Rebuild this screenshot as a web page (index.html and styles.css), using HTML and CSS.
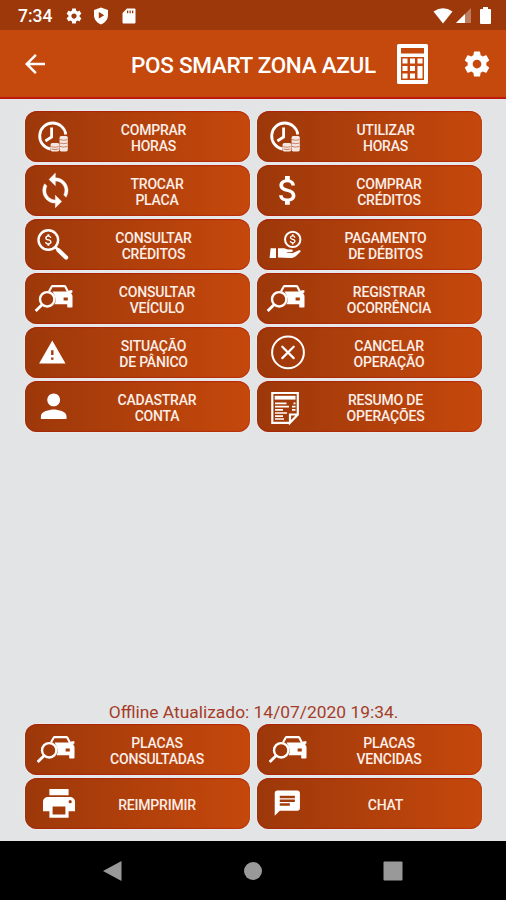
FILE: index.html
```
<!DOCTYPE html>
<html lang="pt-BR">
<head>
    <meta charset="UTF-8">
    <meta name="viewport" content="width=device-width, initial-scale=1.0">
    <title>POS Smart Zona Azul</title>
    <link rel="stylesheet" href="styles.css">
</head>
<body>
    <svg class="sprite">
        <symbol id="gear" viewBox="0 0 24 24">
            <path d="M19.43 12.98c.04-.32.07-.64.07-.98s-.03-.66-.07-.98l2.11-1.65c.19-.15.24-.42.12-.64l-2-3.46c-.12-.22-.39-.3-.61-.22l-2.49 1c-.52-.4-1.08-.73-1.69-.98l-.38-2.65C14.46 2.18 14.25 2 14 2h-4c-.25 0-.46.18-.49.42l-.38 2.65c-.61.25-1.17.59-1.69.98l-2.49-1c-.23-.09-.49 0-.61.22l-2 3.46c-.13.22-.07.49.12.64l2.11 1.65c-.04.32-.07.65-.07.98s.03.66.07.98l-2.11 1.65c-.19.15-.24.42-.12.64l2 3.46c.12.22.39.3.61.22l2.49-1c.52.4 1.08.73 1.69.98l.38 2.65c.03.24.24.42.49.42h4c.25 0 .46-.18.49-.42l.38-2.65c.61-.25 1.17-.59 1.69-.98l2.49 1c.23.09.49 0 .61-.22l2-3.46c.12-.22.07-.49-.12-.64l-2.11-1.65zM12 15.5c-1.93 0-3.5-1.57-3.5-3.5s1.57-3.5 3.5-3.5 3.5 1.57 3.5 3.5-1.57 3.5-3.5 3.5z"/>
        </symbol>
        <symbol id="clock" viewBox="0 0 51 51">
            <path class="stroke" stroke-width="2.8" d="M40.8 23.5A13.1 13.1 0 1 0 25.5 38"/>
            <path class="stroke" stroke-width="2.8" d="M26.6 16.5V26l-6.2 4"/>
            <rect x="34.6" y="25" width="8.2" height="15.4" rx="1.6" opacity=".88"/>
            <rect x="25.6" y="32" width="8.6" height="8.4" rx="1.6" opacity=".88"/>
            <path class="cut" d="M35 28.6q3.7 1.4 7.4 0M35 32q3.7 1.4 7.4 0M35 35.4q3.7 1.4 7.4 0M26.4 35.6q3.6 1.4 7.2 0M26.4 38q3.6 1.2 7.2 0"/>
        </symbol>
        <symbol id="loop" viewBox="0 0 51 51">
            <path stroke="white" stroke-width=".25" transform="translate(11.4 6.5) scale(1.58)" d="M12 4V1L8 5l4 4V6c3.31 0 6 2.69 6 6 0 1.01-.25 1.97-.7 2.8l1.46 1.46C19.54 15.03 20 13.57 20 12c0-4.42-3.58-8-8-8zm0 14c-3.31 0-6-2.69-6-6 0-1.01.25-1.97.7-2.8L5.24 7.74C4.46 8.97 4 10.43 4 12c0 4.42 3.58 8 8 8v3l4-4-4-4v3z"/>
        </symbol>
        <symbol id="dollar" viewBox="0 0 24 24">
            <path d="M11.8 10.9c-2.27-.59-3-1.2-3-2.15 0-1.09 1.01-1.85 2.7-1.85 1.78 0 2.44.85 2.5 2.1h2.21c-.07-1.72-1.12-3.3-3.21-3.81V3h-3v2.16c-1.94.42-3.5 1.68-3.5 3.61 0 2.31 1.91 3.46 4.7 4.13 2.5.6 3 1.48 3 2.41 0 .69-.49 1.79-2.7 1.79-2.06 0-2.87-.92-2.98-2.1h-2.2c.12 2.19 1.76 3.42 3.68 3.83V21h3v-2.15c1.95-.37 3.5-1.5 3.5-3.55 0-2.84-2.43-3.81-4.7-4.4z"/>
        </symbol>
        <symbol id="money" viewBox="0 0 51 51">
            <use href="#dollar" x="12" y="6.2" width="38.4" height="38.4"/>
        </symbol>
        <symbol id="search-money" viewBox="0 0 51 51">
            <circle class="stroke" stroke-width="2.4" cx="23.3" cy="21" r="9.8"/>
            <path class="stroke" stroke-width="2.6" d="M30.3 28l4 4"/>
            <path class="stroke" stroke-width="4.2" d="M33.5 31.2l7.6 7.4" stroke-linecap="round"/>
            <use href="#dollar" x="16" y="13.3" width="15.4" height="15.4"/>
        </symbol>
        <symbol id="hand" viewBox="0 0 51 51">
            <circle class="stroke" stroke-width="2" cx="35.7" cy="20.4" r="7.7"/>
            <use href="#dollar" x="29.2" y="13.6" width="13.6" height="13.6"/>
            <path d="M13.6 29.2H19v9.8h-6.4z"/>
            <path d="M21 29.2h6c1.6 0 2.6 1.3 4.200 1.300h3.300c1.600 0 1.800 2.200.2 2.400l-5 .5v.7h6.200l6-2.800c1.600-.6 2.300.6 1.300 1.600-2.600 2.600-5.400 5.900-8.400 6-5 .2-9.600-.4-13.800-.4z"/>
        </symbol>
        <symbol id="car" viewBox="0 0 51 51">
            <path class="stroke" stroke-width="2.1" d="M24 18.500l2.600-4.700c.3-.5.6-.7 1.200-.7h11.400c.6 0 1 .2 1.200.7l2.800 5.400"/>
            <path fill-rule="evenodd" d="M27.500 18.500h15l2.300-1.200h2.600v2.200l-1.300.5 1.400 2.700v11.100q0 .8-.8.8H43q-.8 0-.8-.8v-2.600H29.500q3-5-2-12.700zM38.600 24.600v2.900h4.200v-2.900z"/>
            <circle class="stroke" stroke-width="2.400" cx="22.200" cy="26.300" r="7.200"/>
            <path class="stroke" stroke-width="2.800" d="M17 31.700l-6.300 6.400"/>
        </symbol>
        <symbol id="warning" viewBox="0 0 51 51">
            <path transform="translate(12.9 11.2) scale(1.2)" d="M1 21h22L12 2 1 21zm12-3h-2v-2h2v2zm0-4h-2v-4h2v4z"/>
        </symbol>
        <symbol id="cancel" viewBox="0 0 51 51">
            <circle class="stroke" stroke-width="2" cx="31" cy="25.4" r="15.9"/>
            <path class="stroke" stroke-width="2.2" stroke-linecap="round" d="M25.3 19.7l11.4 11.4M36.7 19.7L25.300 31.100"/>
        </symbol>
        <symbol id="person" viewBox="0 0 51 51">
            <path transform="translate(9.5 6.1) scale(1.6)" d="M12 12c2.21 0 4-1.79 4-4s-1.79-4-4-4-4 1.79-4 4 1.79 4 4 4zm0 2c-2.67 0-8 1.34-8 4v2h16v-2c0-2.66-5.33-4-8-4z"/>
        </symbol>
        <symbol id="report" viewBox="0 0 51 51">
            <path class="stroke" stroke-width="2.2" d="M33 41.800H15.300V12h25.500v21.500L33 41.800v-8.300h7.800"/>
            <path d="M17.700 14.800h20.800v3.800H17.700z"/>
            <path class="stroke" stroke-width="1.7" d="M18 22.400h11.500M18 25.600h14M18 28.800h8M18 32h12M18 35.200h8M18 38h9M36.500 22.400h2M35 25.600h3.500M35 28.800h3.500"/>
        </symbol>
        <symbol id="printer" viewBox="0 0 51 51">
            <path transform="translate(14.8 6.1) scale(1.6)" d="M19 8H5c-1.66 0-3 1.34-3 3v6h4v4h12v-4h4v-6c0-1.66-1.34-3-3-3zm-3 11H8v-5h8v5zm3-7c-.55 0-1-.45-1-1s.45-1 1-1 1 .45 1 1-.45 1-1 1zm-1-9H6v4h12V3z"/>
        </symbol>
        <symbol id="chat" viewBox="0 0 51 51">
            <path transform="translate(15.2 10.1) scale(1.26)" d="M20 2H4c-1.1 0-1.99.9-1.99 2L2 22l4-4h14c1.1 0 2-.9 2-2V4c0-1.1-.9-2-2-2zM6 9h12v2H6V9zm8 5H6v-2h8v2zm4-6H6V6h12v2z"/>
        </symbol>
    </svg>

    <div class="screen">
        <div class="status-bar">
            <span class="time">7:34</span>
            <svg class="status-gear" viewBox="0 0 24 24"><use href="#gear"/></svg>
            <svg class="status-shield" viewBox="0 0 16 18"><path fill-rule="evenodd" d="M8 .5l7 2.6v5.2c0 4.3-3 7.6-7 9.2-4-1.6-7-4.9-7-9.200V3.100zM5.800 5v6.600l5.400-3.300z"/></svg>
            <svg class="status-card" viewBox="0 0 14 16"><path fill-rule="evenodd" d="M5 .5h7.5q1 0 1 1v13q0 1-1 1h-11q-1 0-1-1V5zM5 2.500v2.800h1.300V2.500zM7.500 2.500v2.800h1.300V2.500zM10 2.500v2.800h1.300V2.500z"/></svg>
            <div class="status-right">
                <svg width="20" height="16" viewBox="0 0 20 16"><path d="M10 15.5L.5 3.5Q10-3 19.5 3.5z"/></svg>
                <svg width="15" height="15" viewBox="0 0 15 15"><path opacity=".35" d="M15 0v15H0z"/><path d="M9 6v9H0z"/></svg>
                <svg class="battery" width="11" height="17" viewBox="0 0 11 17"><path d="M3 0h5v2h2q1 0 1 1v13q0 1-1 1H1q-1 0-1-1V3q0-1 1-1h2z"/></svg>
            </div>
        </div>

        <div class="toolbar">
            <svg class="back" viewBox="0 0 24 24"><path d="M20 11H7.83l5.59-5.59L12 4l-8 8 8 8 1.41-1.41L7.83 13H20v-2z"/></svg>
            <h1>POS SMART ZONA AZUL</h1>
            <svg class="calculator" viewBox="0 0 31 40">
                <path fill-rule="evenodd" d="M1.5 0h28Q31 0 31 1.5v37q0 1.5-1.5 1.5h-28Q0 40 0 38.5v-37Q0 0 1.5 0zM4 4v5.500h23V4zM4 13v23h23V13z"/>
                <path d="M5.500 14.500h5v5h-5zM13 14.500h5v5h-5zM20.500 14.500h5v5h-5zM5.500 22h5v5h-5zM13 22h5v5h-5zM20.500 22h5v12.500h-5zM5.500 29.500h5v5h-5zM13 29.500h5v5h-5z"/>
            </svg>
            <svg class="settings" viewBox="0 0 24 24"><use href="#gear"/></svg>
        </div>

        <div class="content">
            <div class="grid">
                <button class="btn"><svg><use href="#clock"/></svg><span>COMPRAR<br>HORAS</span></button>
                <button class="btn"><svg><use href="#clock"/></svg><span>UTILIZAR<br>HORAS</span></button>
                <button class="btn wide"><svg><use href="#loop"/></svg><span>TROCAR<br>PLACA</span></button>
                <button class="btn wide"><svg><use href="#money"/></svg><span>COMPRAR<br>CRÉDITOS</span></button>
                <button class="btn"><svg><use href="#search-money"/></svg><span>CONSULTAR<br>CRÉDITOS</span></button>
                <button class="btn"><svg><use href="#hand"/></svg><span>PAGAMENTO<br>DE DÉBITOS</span></button>
                <button class="btn wide"><svg><use href="#car"/></svg><span>CONSULTAR<br>VEÍCULO</span></button>
                <button class="btn wide"><svg><use href="#car"/></svg><span>REGISTRAR<br>OCORRÊNCIA</span></button>
                <button class="btn"><svg><use href="#warning"/></svg><span>SITUAÇÃO<br>DE PÂNICO</span></button>
                <button class="btn wide"><svg><use href="#cancel"/></svg><span>CANCELAR<br>OPERAÇÃO</span></button>
                <button class="btn wide"><svg><use href="#person"/></svg><span>CADASTRAR<br>CONTA</span></button>
                <button class="btn"><svg><use href="#report"/></svg><span>RESUMO DE<br>OPERAÇÕES</span></button>
            </div>

            <p class="offline">Offline Atualizado: 14/07/2020 19:34.</p>
            <div class="grid">
                <button class="btn wide shifted"><svg><use href="#car"/></svg><span>PLACAS<br>CONSULTADAS</span></button>
                <button class="btn wide shifted"><svg><use href="#car"/></svg><span>PLACAS<br>VENCIDAS</span></button>
                <button class="btn wide"><svg><use href="#printer"/></svg><span>REIMPRIMIR</span></button>
                <button class="btn"><svg><use href="#chat"/></svg><span>CHAT</span></button>
            </div>
        </div>

        <div class="nav-bar">
            <svg width="20" height="20" viewBox="0 0 20 20"><path d="M18.5 0v20L0 10z"/></svg>
            <svg width="20" height="20" viewBox="0 0 20 20"><circle cx="10" cy="10" r="9"/></svg>
            <svg width="20" height="20" viewBox="0 0 20 20"><rect x=".5" y=".5" width="19" height="19" rx="1"/></svg>
        </div>
    </div>
</body>
</html>
```
FILE: styles.css
```
body, html {
    margin: 0;
    padding: 0;
    height: 100%;
    font-family: Roboto, sans-serif;
    background-color: #e2e4e6;
}
svg {
    fill: white;
    flex-shrink: 0;
}
.sprite {
    display: none;
}
.stroke {
    fill: none;
    stroke: white;
}
.cut {
    fill: none;
    stroke: #a63b0b;
    stroke-width: 0.6px;
}
.screen {
    height: 900px;
    display: flex;
    flex-direction: column;
    overflow: hidden;
}
.status-bar {
    height: 30px;
    display: flex;
    align-items: center;
    padding: 1px 15px 0 18px;
    box-sizing: border-box;
    background: #9c380a;
    color: white;
}
.time {
    width: 47px;
    font-size: 17.5px;
    font-weight: 500;
}
.status-gear {
    width: 18px;
    height: 18px;
}
.status-shield {
    width: 16px;
    height: 18px;
    margin-left: 10px;
}
.status-card {
    width: 14px;
    height: 16px;
    margin-left: 13px;
}
.status-right {
    display: flex;
    align-items: center;
    margin-left: auto;
}
.status-right svg + svg {
    margin-left: 3px;
}
.status-right .battery {
    margin-left: 9px;
}
.toolbar {
    height: 69px;
    display: flex;
    align-items: center;
    padding: 0 14px 0 20px;
    box-sizing: border-box;
    background: #c5480c;
    border-bottom: 2px solid #bd1a0c;
}
.back {
    width: 30px;
    height: 30px;
}
.toolbar h1 {
    width: 246px;
    margin: 3px 0 0 81px;
    font-size: 22.5px;
    font-weight: 500;
    line-height: 28px;
    letter-spacing: -0.3px;
    white-space: nowrap;
    color: white;
}
.calculator {
    width: 31px;
    height: 40px;
    margin-left: 20px;
}
.settings {
    width: 30px;
    height: 30px;
    margin-left: auto;
}
.content {
    flex: 1;
    display: flex;
    flex-direction: column;
    padding: 12px 24px 12px 25px;
}
.grid {
    display: grid;
    grid-template-columns: 225px 225px;
    grid-auto-rows: 51px;
    gap: 3px 7px;
}
.btn {
    display: flex;
    align-items: center;
    padding: 0;
    border: none;
    border-radius: 12px;
    background: linear-gradient(90deg, #9d380a, #c5480c);
    box-shadow: inset 0 1px 1px rgba(175, 20, 10, 0.6), inset 0 -1px 1px rgba(175, 20, 10, 0.5), 0 0 2px rgba(255, 255, 255, 0.8);
    color: #fdeee8;
    font-family: inherit;
    font-size: 14px;
    font-weight: 500;
    line-height: 16px;
    letter-spacing: -0.2px;
    text-align: center;
}
.btn svg {
    width: 51px;
    height: 51px;
}
.btn span {
    flex: 1;
    padding: 2px 19px 0 0;
}
.btn.wide span {
    padding-right: 12px;
}
.btn.shifted svg {
    margin: 0 -2px 0 2px;
}
.offline {
    margin: auto 0 1px;
    font-size: 17.4px;
    line-height: 22px;
    text-align: center;
    color: #a63c28;
}
.nav-bar {
    height: 59px;
    display: flex;
    align-items: center;
    justify-content: space-between;
    padding: 0 103px;
    box-sizing: border-box;
    background: black;
}
.nav-bar svg {
    fill: #999;
}
```
